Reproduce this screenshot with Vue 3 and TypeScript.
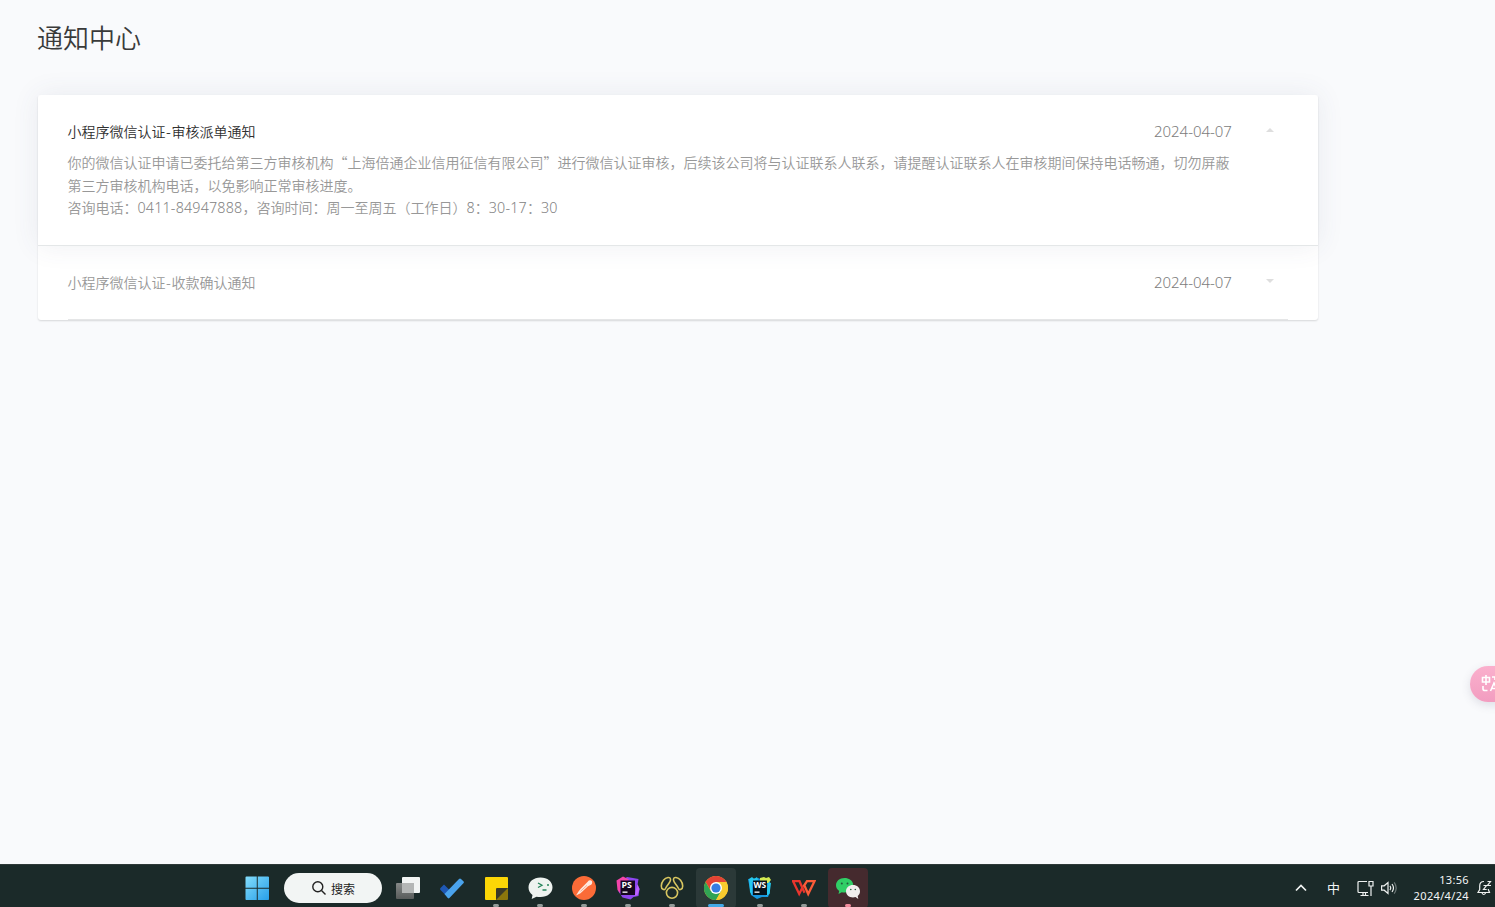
<script setup lang="ts">
import { ref } from 'vue'

interface Notice {
  id: number
  title: string
  date: string
}

const notices: Notice[] = [
  { id: 1, title: '审核派单通知', date: '2024-04-07' },
  { id: 2, title: '收款确认通知', date: '2024-04-07' },
]
const openId = ref(1)
</script>

<template>
  <div class="screen">
    <main class="page">
      <h1>通知中心</h1>
      <section class="card">
        <article v-for="n in notices" :key="n.id" class="notice" :class="{ open: n.id === openId }" @click="openId = n.id">
          <header class="head">
            <span class="title">小程序微信认证<i class="hy">-</i>{{ n.title }}</span>
            <time class="date">{{ n.date }}</time>
            <svg class="arrow" viewBox="0 0 8 4"><path :d="n.id === openId ? 'M0 4L4 0L8 4Z' : 'M0 0L4 4L8 0Z'" /></svg>
          </header>
          <div v-if="n.id === openId" class="body">
            你的微信认证申请已委托给第三方审核机构“上海倍通企业信用征信有限公司”进行微信认证审核，后续该公司将与认证联系人联系，请提醒认证联系人在审核期间保持电话畅通，切勿屏蔽<br />第三方审核机构电话，以免影响正常审核进度。<br />咨询电话：<span class="num">0411-84947888</span>，咨询时间：周一至周五（工作日）<span class="num">8</span>：<span class="num">30-17</span>：<span class="num">30</span>
          </div>
        </article>
      </section>
    </main>

    <div class="translate">
      <svg viewBox="0 0 36 36" width="36" height="36">
        <g fill="none" stroke="#fff" stroke-width="1.6">
          <path d="M12.5 11.5h7v4.5h-7zM16 9v10M22 11h3v3M13 20v3q0 1.5 2 1.5h2.500M20.500 25l3.500-8 3.500 8M22 22.500h4" />
        </g>
      </svg>
    </div>

    <footer class="taskbar">
      <nav class="apps">
        <div class="cell">
          <svg width="24" height="24" viewBox="0 0 24 24">
            <defs><linearGradient id="win" x1="0" y1="0" x2="1" y2="1" gradientUnits="objectBoundingBox"><stop offset="0" stop-color="#83dcfb" /><stop offset="1" stop-color="#279fe9" /></linearGradient></defs>
            <path fill="url(#win)" transform="translate(.5 .5) scale(.98)" d="M1 0h10.500v11.500H0V1q0-1 1-1zM12.500 0H23q1 0 1 1v10.500H12.500zM0 12.500h11.500V24H1q-1 0-1-1zM12.500 12.500H24V23q0 1-1 1H12.500z" />
          </svg>
        </div>
        <div class="search">
          <svg width="14" height="14" viewBox="0 0 14 14" fill="none" stroke="#222" stroke-width="1.400"><circle cx="5.800" cy="5.800" r="5" /><path d="M9.500 9.500l4 4" /></svg>
          <span>搜索</span>
        </div>
        <div class="cell">
          <svg width="24" height="22" viewBox="0 0 24 22">
            <defs><linearGradient id="tv" x1="0" y1="0" x2="0" y2="1"><stop offset="0" stop-color="#858887" /><stop offset="1" stop-color="#595c5b" /></linearGradient></defs>
            <rect x="6" width="18" height="16" rx="1" fill="#f2f4f3" /><rect y="6" width="18" height="16" rx="1" fill="url(#tv)" /><path fill="#b4b6b5" d="M6 6h12v10H6z" />
          </svg>
        </div>
        <div class="cell">
          <svg width="24" height="21" viewBox="0 0 24 21"><path fill="#1f58b4" d="M4 6.500L.5 10q-.8 1 0 2L8.500 20 13 15.500z" /><path fill="#4aa3ec" d="M4.500 16L19 1q1-1 2 0l2.400 2.200q1 1 0 2l-14 14.800q-.8.8-1.600 0z" /></svg>
        </div>
        <div class="cell">
          <svg width="23" height="23" viewBox="0 0 23 23"><path fill="#fcd606" d="M1 0h21q1 0 1 1v10L11 23H1q-1 0-1-1V1q0-1 1-1z" /><path fill="#8b760c" d="M23 11v11q0 1-1 1H11z" /><path fill="#3b3a27" d="M12 11h11L11 23V12q0-1 1-1z" /></svg>
          <i class="dot"></i>
        </div>
        <div class="cell">
          <svg width="25" height="23" viewBox="0 0 25 23"><path fill="#eef3f0" d="M12.500.5C5.500.5.500 4.700.500 10.500c0 3.300 1.600 5.800 4 7.500L3.700 22l4.800-2.300c1.300.3 2.600.4 4 .4 7 0 12-4.200 12-9.800S19.500.5 12.500.5z" /><g fill="none" stroke="#24845a" stroke-width="1.300"><path d="M10 6l4 2.300-4 2.200M14.500 13h4" /></g><circle cx="20" cy="8" r="1" fill="#24845a" /></svg>
          <i class="dot"></i>
        </div>
        <div class="cell">
          <svg width="24" height="24" viewBox="0 0 24 24"><circle cx="12" cy="12" r="12" fill="#fb6b37" /><path fill="#fde9df" d="M20 5.200a2.500 2.500 0 0 0-4.300.6L8.500 13 6.500 15.500 4 19.500l4.500-2.300L16 10.300l2-1q2.800-1.200 2-4.100z" /><path d="M8.500 15.300l6.500-6" stroke="#fb9d78" stroke-width=".8" /></svg>
          <i class="dot"></i>
        </div>
        <div class="cell">
          <svg width="24" height="24" viewBox="0 0 24 24"><path fill="#8d46f0" d="M3 7L11 1l6 1 5.500 1-1 6 2 4-1 7-5 1-3 2.500-8-2-4-6z" /><path fill="#f344a9" d="M.5 4.500L7 .5l6 3L5 10 4 17 1.500 14z" /><path fill="#be63ff" d="M21.500 8l2 5-2 6-3 1z" /><path fill="#150720" d="M4.500 4.500h14.500v14.500H4.500z" /><text x="5.600" y="12" class="ide">PS</text><path fill="#fff" d="M6.500 15.500h5v1.300h-5z" /></svg>
          <i class="dot"></i>
        </div>
        <div class="cell">
          <svg width="24" height="24" viewBox="0 0 24 24" fill="none" stroke="#d8c660" stroke-width="1.600"><ellipse cx="12" cy="16.800" rx="5.600" ry="5.400" /><path d="M5.500 12.500C4.500 14.500 1.300 13.500 1.300 10 1.500 5.500 4.500 2 8 1.500c1.800-.2 2.700.8 2.500 2.500-.3 3-3 4-5 8.500M18.500 12.500c1 2 4.200 1 4.200-2.500C22.500 5.500 19.500 2 16 1.500c-1.800-.2-2.700.8-2.500 2.500.3 3 3 4 5 8.500" /></svg>
          <i class="dot"></i>
        </div>
        <div class="cell active">
          <svg width="24" height="24" viewBox="0 0 24 24"><circle cx="12" cy="12" r="12" fill="#f9cb2e" /><path fill="#e44335" d="M1.600 6A12 12 0 0 1 22.400 6H12L7 15z" /><path fill="#31a354" d="M1.600 6A12 12 0 0 0 12 24l5.200-9-10.400 0z" /><path fill="#f9cb2e" d="M12 6h10.400A12 12 0 0 1 12 24l5.200-9z" /><circle cx="12" cy="12" r="6" fill="#fff" /><circle cx="12" cy="12" r="4.600" fill="#367de2" /></svg>
          <i class="dot blue"></i>
        </div>
        <div class="cell">
          <svg width="24" height="24" viewBox="0 0 24 24"><path fill="#1797df" d="M0 3l10-1 5 2 7 0v12l-2 5-6 0-5 2-6-4z" /><path fill="#25c8ed" d="M1 3l3-2 2 2 3-2 1 3-6 2v13l-2-3zM20 6l3 1-1.500 11-3.500 2z" /><path fill="#d4eb52" d="M12 2l4-1 2 1 3-1 2 3-3 3H12z" /><path fill="#06131b" d="M5 4.500h14v14.500H5z" /><text x="5.400" y="12" class="ide ws">WS</text><path fill="#fff" d="M6.500 15.500h5v1.300h-5z" /></svg>
          <i class="dot"></i>
        </div>
        <div class="cell">
          <svg width="24" height="18" viewBox="0 0 24 18" fill="none" stroke-width="2.300"><path stroke="#e9352d" d="M0 2.200h7.500l5 11.500M1.200 2.500l6 12.500 4-8" /><path stroke="#fb5b38" d="M11.500 7.500l3.500-5.300h7.500l-6.300 12.800-4-9" /></svg>
          <i class="dot"></i>
        </div>
        <div class="cell wechat">
          <svg width="24" height="21" viewBox="0 0 24 21"><path fill="#30ce66" d="M8.500 0C3.500 0 0 3.200 0 7.200c0 2.500 1.200 4.400 3.200 5.700L2.500 16l3.200-1.800q5 1.300 9-1.700 3-2.500 2.400-6.500C16.400 2.400 13 0 8.500 0z" /><path fill="#f1eeee" d="M17 7c-4 0-7 2.700-7 6.200 0 3.600 3 6.200 7 6.200q1.300 0 2.500-.3L22.300 21l-.6-3c1.500-1.200 2.300-2.800 2.300-4.800C24 9.700 21 7 17 7z" /><g fill="#23593b"><circle cx="5.800" cy="5.500" r="1" /><circle cx="11.500" cy="5.500" r="1" /><circle cx="14.800" cy="11.500" r=".8" /><circle cx="19.300" cy="11.500" r=".8" /></g></svg>
          <i class="dot pink"></i>
        </div>
      </nav>
      <div class="tray">
        <svg class="up" width="12" height="8" viewBox="0 0 12 8" fill="none" stroke="#f1f4f3" stroke-width="1.700"><path d="M1 6.500l5-5 5 5" /></svg>
        <span class="ime">中</span>
        <svg class="net" width="17" height="17" viewBox="0 0 17 17" fill="none" stroke="#eef1f0" stroke-width="1.200"><path d="M10 1.500H2q-1 0-1 1v9q0 1 1 1h9M3.500 15.500h8M6 12.500v3M8.500 12.500v3M12 1.500h4v4.500h-4zM14 6v10" /></svg>
        <svg class="vol" width="16" height="14" viewBox="0 0 16 14" fill="none" stroke="#eef1f0" stroke-width="1.200"><path d="M.6 4.800h2.600L7 1.500v11L3.200 9.200H.6zM9 4.800q1.600 2.200 0 4.400M11 3q3 4 0 8" /><path d="M13.200 1.300q4 5.700 0 11.400" stroke="#6d7877" /></svg>
        <div class="clock"><span>13:56</span><span>2024/4/24</span></div>
        <svg class="bell" width="15" height="16" viewBox="0 0 15 16" fill="none" stroke="#eef1f0" stroke-width="1.200"><path d="M7 1.500C4 1.500 2.700 3.500 2.700 6v3.500L1 12.500h11.500l-1.200-3V9M5 13q1.700 3 3.600 0M6.500 5.500h3l-3 4h3.200M10.500 1.500h3l-3 4h3.500" /></svg>
      </div>
    </footer>
  </div>
</template>

<style>
body { margin: 0; background: #f9fafc; }
</style>

<style scoped>
.screen {
  position: relative;
  display: flex;
  flex-direction: column;
  width: 1495px;
  height: 907px;
  overflow: hidden;
  background: #f9fafc;
  font-family: "Noto Sans CJK SC", "Noto Sans", sans-serif;
}
.page { flex: 1; padding: 17px 0 0 38px; }
h1 {
  margin: 0 0 38px -1px;
  font-size: 26px;
  line-height: 40px;
  font-weight: 350;
  color: #3a3a3a;
}
.card {
  width: 1280px;
  height: 225px;
  background: #fff;
  border-radius: 3px;
  box-shadow: 0 1px 2px rgba(0, 0, 0, .14);
}
.notice {
  box-sizing: border-box;
  height: 75px;
  padding: 25px 30px 0 29.5px;
  color: #989898;
  font-size: 14px;
  font-weight: 350;
}
.notice.open {
  position: relative;
  height: 151px;
  border-bottom: 1px solid #e4e7e8;
  box-shadow: 0 0 26px rgba(70, 80, 110, .09);
}
.notice:not(.open) .head { height: 48px; border-bottom: 1px solid #e5e6e7; }
.head { display: flex; align-items: flex-start; line-height: 22px; }
.title { flex: 1; }
.open .title { color: #303030; }
.hy { display: inline-block; width: 6px; font-style: normal; text-align: center; }
.date { width: 78px; color: #7c7c7c; font: 350 15px/22px "Noto Sans", sans-serif; letter-spacing: -.03px; white-space: nowrap; }
.arrow { width: 8px; height: 4px; margin: 8px 14px 0 34px; fill: #dedede; }
.body { margin-top: 9px; line-height: 22.5px; white-space: nowrap; }
.num { color: #828282; font-family: "Noto Sans", sans-serif; font-size: 14.3px; line-height: 1; letter-spacing: .18px; }

.translate {
  position: absolute;
  left: 1470px;
  top: 666px;
  height: 36px;
  width: 60px;
  border-radius: 18px;
  background: linear-gradient(#fab0cd, #f29dc0);
  box-shadow: 0 3px 10px rgba(80, 80, 110, .16);
}

.taskbar {
  box-sizing: border-box;
  display: flex;
  height: 43px;
  justify-content: space-between;
  padding: 0 3px 0 235px;
  background: #1b2a29;
  border-top: 1px solid #2e3938;
}
.apps { display: flex; align-items: flex-start; }
.cell {
  box-sizing: border-box;
  position: relative;
  display: flex;
  justify-content: center;
  align-items: center;
  width: 40px;
  height: 40px;
  margin: 3px 2px 0;
  border-radius: 4px;
}
.active { background: #2b3938; }
.wechat { background: #452a2e; }
.dot {
  position: absolute;
  left: 17px;
  top: 36px;
  width: 6px;
  height: 3px;
  border-radius: 2px;
  background: #929b99;
}
.blue { left: 12px; width: 16px; background: #43a9e8; }
.pink { background: #f38c9d; }
.ide { font: 700 8.800px "Open Sans", sans-serif; fill: #fff; }
.ws { font-size: 8.400px; }
.search {
  box-sizing: border-box;
  display: flex;
  align-items: center;
  justify-content: center;
  gap: 5px;
  width: 98px;
  height: 30px;
  margin: 8px 4px 0 5px;
  padding-left: 1px;
  border-radius: 15px;
  background: #f2f5f4;
  color: #1c1c1c;
  font-size: 12px;
}
.tray { display: flex; align-items: center; height: 46px; color: #f3f5f5; }
.up { margin-right: 20px; }
.ime { width: 13px; margin-right: 17px; font-size: 13px; line-height: 20px; }
.net { margin-right: 7px; }
.vol { margin-right: 12px; }
.clock {
  display: flex;
  flex-direction: column;
  width: 60px;
  margin-right: 8px;
  text-align: right;
  font: 11px/16px "Noto Sans", sans-serif;
  letter-spacing: .35px;
}
</style>
